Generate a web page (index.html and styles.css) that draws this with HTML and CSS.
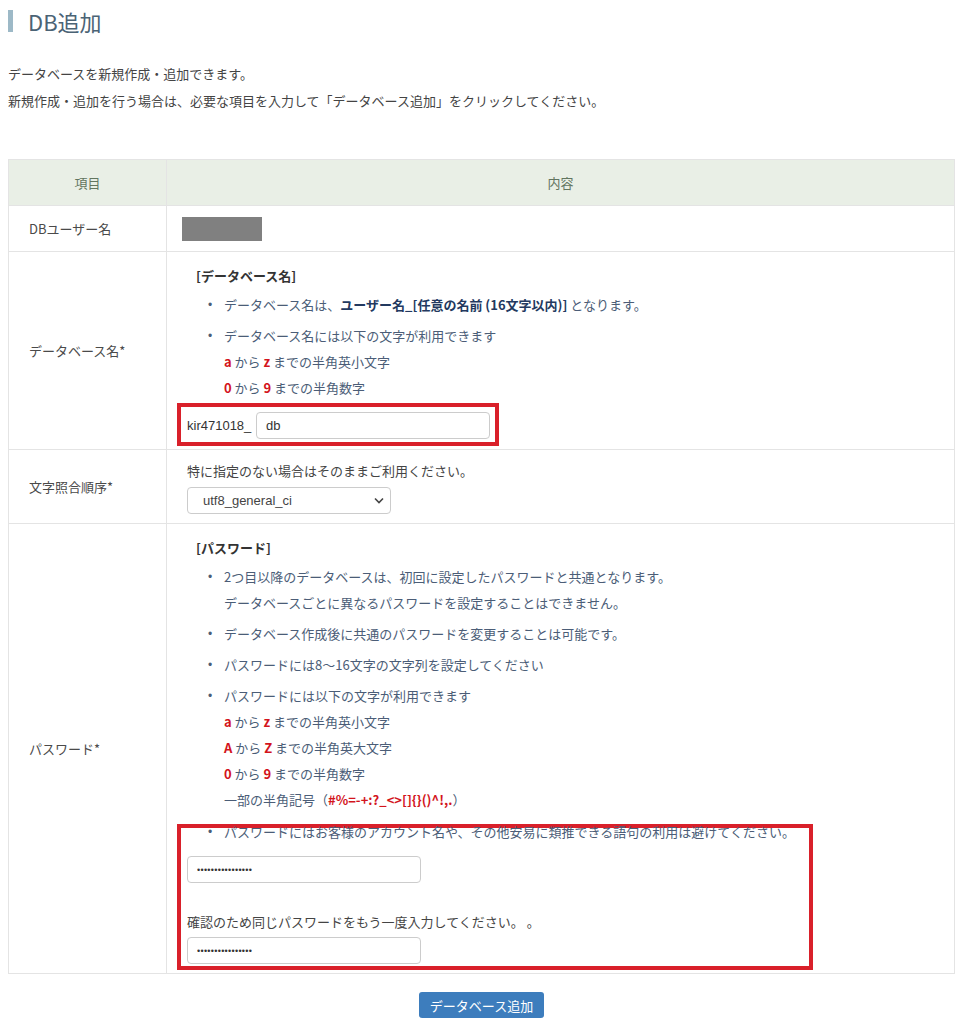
FILE: index.html
```html
<!DOCTYPE html>
<html lang="ja">
<head>
<meta charset="UTF-8">
<title>DB追加</title>
<link rel="stylesheet" href="styles.css">
</head>
<body>

<h1 class="title">DB追加</h1>

<div class="intro">
  <p>データベースを新規作成・追加できます。</p>
  <p>新規作成・追加を行う場合は、必要な項目を入力して「データベース追加」をクリックしてください。</p>
</div>

<table class="form-table">
  <tr>
    <th class="col-label">項目</th>
    <th>内容</th>
  </tr>
  <tr class="row-short">
    <td class="label">DBユーザー名</td>
    <td class="content"><span class="masked"></span></td>
  </tr>
  <tr>
    <td class="label">データベース名*</td>
    <td class="content block">
      <div class="heading">[データベース名]</div>
      <ul class="notes">
        <li><div>データベース名は、<b class="strong">ユーザー名_[任意の名前 (16文字以内)]</b> となります。</div></li>
        <li>
          <div>
            <div>データベース名には以下の文字が利用できます</div>
            <div><b class="red">a</b> から <b class="red">z</b> までの半角英小文字</div>
            <div><b class="red">0</b> から <b class="red">9</b> までの半角数字</div>
          </div>
        </li>
      </ul>
      <div class="mark mark-name">
        <span class="prefix">kir471018_</span>
        <input type="text" class="field field-name" value="db">
      </div>
    </td>
  </tr>
  <tr>
    <td class="label">文字照合順序*</td>
    <td class="content collation">
      <div class="line">特に指定のない場合はそのままご利用ください。</div>
      <div class="select-wrap">
        <select class="select">
          <option selected="selected">utf8_general_ci</option>
          <option>utf8mb4_general_ci</option>
        </select>
        <svg class="chevron" width="10" height="7" viewBox="0 0 10 7"><path d="M1 1.5 L5 5.5 L9 1.5" fill="none" stroke="#444" stroke-width="1.6"/></svg>
      </div>
    </td>
  </tr>
  <tr>
    <td class="label">パスワード*</td>
    <td class="content block">
      <div class="heading">[パスワード]</div>
      <ul class="notes">
        <li>
          <div>
            <div>2つ目以降のデータベースは、初回に設定したパスワードと共通となります。</div>
            <div>データベースごとに異なるパスワードを設定することはできません。</div>
          </div>
        </li>
        <li><div>データベース作成後に共通のパスワードを変更することは可能です。</div></li>
        <li><div>パスワードには8～16文字の文字列を設定してください</div></li>
        <li>
          <div>
            <div>パスワードには以下の文字が利用できます</div>
            <div><b class="red">a</b> から <b class="red">z</b> までの半角英小文字</div>
            <div><b class="red">A</b> から <b class="red">Z</b> までの半角英大文字</div>
            <div><b class="red">0</b> から <b class="red">9</b> までの半角数字</div>
            <div>一部の半角記号（<b class="red">#%=-+:?_&lt;&gt;[]{}()^!,.</b>）</div>
          </div>
        </li>
      </ul>
      <div class="mark mark-pass">
        <ul class="notes notes-last">
          <li><div>パスワードにはお客様のアカウント名や、その他安易に類推できる語句の利用は避けてください。</div></li>
        </ul>
        <input type="password" class="field field-pass" value="abcdefghijklmnop">
        <div class="line confirm">確認のため同じパスワードをもう一度入力してください。 。</div>
        <input type="password" class="field field-pass field-confirm" value="abcdefghijklmnop">
      </div>
    </td>
  </tr>
</table>

<div class="actions">
  <button class="submit">データベース追加</button>
</div>

</body>
</html>
```

FILE: styles.css
```css
body {
  margin: 0;
  padding: 10px 0 0 8px;
  background-color: #FFFFFF;
  color: #444444;
  font-family: "Noto Sans CJK JP", "Noto Sans", sans-serif;
  font-size: 13px;
}

/* Titulo con barra lateral */
.title {
  margin: 0;
  height: 22px;
  line-height: 22px;
  padding-left: 15px;
  border-left: 5px solid #9db9c7;
  color: #4b6375;
  font-size: 22px;
  font-weight: normal;
}

.intro {
  margin-top: 28px;
}

.intro p {
  margin: 0;
  line-height: 27px;
  color: #444444;
}

.form-table {
  width: 947px;
  margin-top: 45px;
  border-collapse: collapse;
}

.form-table th,
.form-table td {
  border: 1px solid #e4e4e4;
  padding: 0;
}

.form-table th {
  height: 45px;
  background-color: #e9efe6;
  color: #627560;
  font-weight: normal;
  text-align: center;
}

.col-label {
  width: 157px;
}

.label {
  padding-left: 20px !important;
  color: #4a4a4a;
  vertical-align: middle;
}

.row-short td {
  height: 45px;
}

.content {
  padding: 0 20px !important;
  vertical-align: top;
}

.row-short .content {
  vertical-align: middle;
}

.masked {
  display: block;
  width: 80px;
  height: 24px;
  margin-left: -5px;
  background-color: #808080;
}

.block {
  padding-top: 11px !important;
  padding-bottom: 3px !important;
}

.heading {
  margin-left: 9px;
  line-height: 26px;
  font-weight: bold;
  color: #333333;
}

.notes {
  list-style: none;
  margin: 3px 0 0 21px;
  padding: 0;
  color: #4b5d77;
  line-height: 26px;
}

.notes li {
  display: flex;
}

.notes li + li {
  margin-top: 5px;
}

.notes li::before {
  content: "•";
  flex: 0 0 16px;
  font-family: "Liberation Sans", sans-serif;
  font-size: 12px;
}

.strong {
  color: #23395f;
}

.red {
  color: #d3141c;
}

/* Recuadros rojos de marcado */
.mark {
  border: 4px solid #d9202a;
  padding: 5px 5px 3px 6px;
}

.mark-name {
  display: flex;
  align-items: center;
  width: 303px;
  margin: 2px 0 0 -10px;
}

.prefix {
  width: 69px;
  flex: 0 0 69px;
  color: #333333;
  font-family: "Liberation Sans", sans-serif;
}

.field {
  box-sizing: border-box;
  height: 27px;
  border: 1px solid #cccccc;
  border-radius: 4px;
  padding: 0 9px;
  color: #333333;
  font-family: "Liberation Sans", sans-serif;
  font-size: 13px;
}

.field-name {
  width: 234px;
}

.collation {
  padding-top: 8px !important;
  padding-bottom: 9px !important;
}

.line {
  line-height: 26px;
  color: #444444;
}

.select-wrap {
  position: relative;
  width: 204px;
  height: 27px;
  margin-top: 3px;
}

.select {
  -webkit-appearance: none;
  appearance: none;
  display: block;
  box-sizing: border-box;
  width: 204px;
  height: 27px;
  padding: 0 0 0 15px;
  border: 1px solid #cccccc;
  border-radius: 4px;
  background-color: #FFFFFF;
  color: #444444;
  font-family: "Liberation Sans", sans-serif;
  font-size: 13px;
}

.chevron {
  position: absolute;
  right: 7px;
  top: 10px;
}

.mark-pass {
  width: 617px;
  margin: 11px 0 0 -10px;
  padding: 0 5px 2px 6px;
}

.notes-last {
  margin-top: -9px;
}

.field-pass {
  display: block;
  width: 234px;
  margin-top: 11px;
  font-size: 9px;
  letter-spacing: 0.3px;
}

.confirm {
  margin-top: 26px;
}

.field-confirm {
  margin-top: 2px;
}

.actions {
  width: 947px;
  margin-top: 18px;
  text-align: center;
}

.submit {
  height: 26px;
  padding: 0 11px;
  border: none;
  border-radius: 3px;
  background-color: #3d7dbd;
  color: #FFFFFF;
  font-family: "Noto Sans CJK JP", sans-serif;
  font-size: 13px;
  cursor: pointer;
}
```
